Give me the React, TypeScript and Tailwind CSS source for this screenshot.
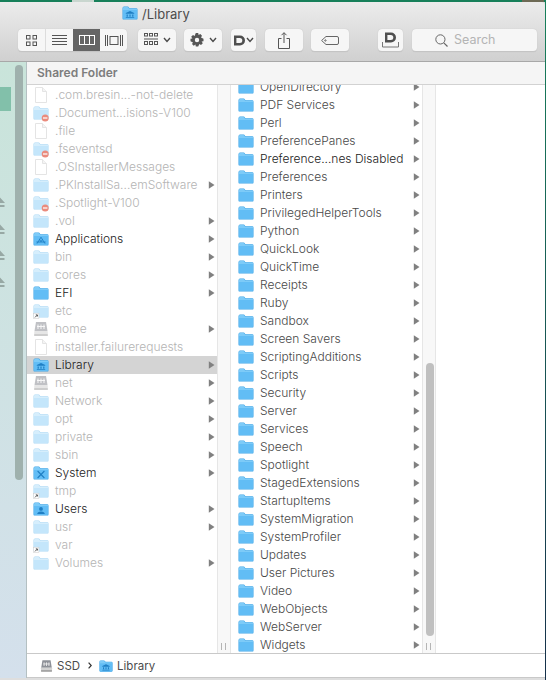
import React from "react";

type Glyph = "none" | "noentry" | "alias" | "apps" | "library" | "system" | "users";

function Folder({ dim = false, glyph = "none", size = 16 }: { dim?: boolean; glyph?: Glyph; size?: number }) {
  const body = dim ? "#c4e6fb" : "#62bdf5";
  const top = dim ? "#d6eefc" : "#7dcbf8";
  const edge = dim ? "#aad8f5" : "#3ea4e6";
  const mark = "#1f7fc4";
  return (
    <svg width={size} height={size} viewBox="0 0 16 16" className="shrink-0 overflow-visible">
      <path d="M0.5 3.2 Q0.5 1.6 2 1.6 H5.6 Q6.4 1.6 6.9 2.4 L7.4 3.2 H14.2 Q15.5 3.2 15.5 4.5 V13.4 Q15.5 14.6 14.2 14.6 H1.8 Q0.5 14.6 0.5 13.4 Z" fill={edge} />
      <path d="M0.9 4.9 H15.1 V13.3 Q15.1 14 14.2 14 H1.8 Q0.9 14 0.9 13.3 Z" fill={body} />
      <path d="M0.9 3.3 Q0.9 2.1 2 2.1 H5.5 Q6.1 2.1 6.5 2.8 L7.1 3.8 H14.2 Q15.1 3.8 15.1 4.7 V5 H0.9 Z" fill={top} />
      {glyph === "noentry" && (
        <g>
          <circle cx="12.2" cy="13" r="3.5" fill="#ea8b7d" />
          <rect x="10" y="12.4" width="4.4" height="1.2" fill="#ffffff" />
        </g>
      )}
      {glyph === "alias" && (
        <g>
          <rect x="0.5" y="10.2" width="5.4" height="5.4" fill="#ffffff" stroke="#c9c9c9" strokeWidth="0.5" />
          <path d="M2 14.4 L4.2 12.2 M2.8 11.9 H4.4 V13.5" stroke="#444444" strokeWidth="0.9" fill="none" />
        </g>
      )}
      {glyph === "apps" && (
        <path d="M8 6.2 L4 12.6 M8 6.2 L12 12.6 M3.4 11 H12.6 M6.4 8.2 L8 10.8 L9.6 8.2" stroke={mark} strokeWidth="0.9" fill="none" />
      )}
      {glyph === "library" && (
        <path d="M8 6 L12.2 8 V8.8 H3.8 V8 Z M4.6 9.4 H5.8 V11.8 H4.6 Z M7.4 9.4 H8.6 V11.8 H7.4 Z M10.2 9.4 H11.4 V11.8 H10.2 Z M3.8 12.2 H12.2 V13 H3.8 Z" fill={mark} />
      )}
      {glyph === "system" && <path d="M4.6 6 L11.4 13 M11.4 6 L4.6 13" stroke={mark} strokeWidth="1.1" fill="none" />}
      {glyph === "users" && (
        <path d="M8 6 A1.9 1.9 0 1 1 8 9.8 A1.9 1.9 0 1 1 8 6 Z M4.2 13 Q4.4 10.4 8 10.4 Q11.6 10.4 11.8 13 Z" fill={mark} />
      )}
    </svg>
  );
}

function Doc() {
  return (
    <svg width={16} height={16} viewBox="0 0 16 16" className="shrink-0">
      <path d="M2.5 0.5 H9.5 L13.5 4.5 V15.5 H2.5 Z" fill="#ffffff" stroke="#e4e4e4" />
      <path d="M9.5 0.5 V4.5 H13.5" fill="#f4f4f4" stroke="#e4e4e4" />
    </svg>
  );
}

function Drive({ dim = true, w = 16 }: { dim?: boolean; w?: number }) {
  return (
    <svg width={w} height={16} viewBox="0 0 16 16" className="shrink-0" opacity={dim ? 0.55 : 1}>
      <path d="M3 1 H13 L14.5 10 H1.5 Z" fill="#8d9097" />
      <rect x="1.2" y="10" width="13.6" height="5" rx="0.8" fill="#d2d2d2" />
      <rect x="1.2" y="13" width="13.6" height="2" rx="0.6" fill="#a5a5a5" />
      <path d="M5 3.5 V8 M8 3.5 V8 M11 3.5 V8 M4 5.5 H12" stroke="#f2f2f2" strokeWidth="1" fill="none" />
    </svg>
  );
}

function Arrow() {
  return (
    <svg width={7} height={8} viewBox="0 0 7 8" className="shrink-0">
      <path d="M0.8 0.3 L6.5 4 L0.8 7.7 Z" fill="#808080" />
    </svg>
  );
}

type Row = { n: string; dim?: boolean; g?: Glyph; kind?: "folder" | "doc" | "drive"; arrow?: boolean; sel?: boolean; dark?: boolean };

const col1: Row[] = [
  { n: ".com.bresin...-not-delete", dim: true, kind: "doc" },
  { n: ".Document...isions-V100", dim: true, g: "noentry" },
  { n: ".file", dim: true, kind: "doc" },
  { n: ".fseventsd", dim: true, g: "noentry" },
  { n: ".OSInstallerMessages", dim: true, kind: "doc" },
  { n: ".PKInstallSa...emSoftware", dim: true, arrow: true },
  { n: ".Spotlight-V100", dim: true, g: "noentry" },
  { n: ".vol", dim: true, arrow: true },
  { n: "Applications", g: "apps", arrow: true, dark: true },
  { n: "bin", dim: true, arrow: true },
  { n: "cores", dim: true, arrow: true },
  { n: "EFI", arrow: true, dark: true },
  { n: "etc", dim: true, g: "alias" },
  { n: "home", dim: true, kind: "drive", arrow: true },
  { n: "installer.failurerequests", dim: true, kind: "doc" },
  { n: "Library", g: "library", arrow: true, sel: true, dark: true },
  { n: "net", dim: true, kind: "drive", arrow: true },
  { n: "Network", dim: true, arrow: true },
  { n: "opt", dim: true, arrow: true },
  { n: "private", dim: true, arrow: true },
  { n: "sbin", dim: true, arrow: true },
  { n: "System", g: "system", arrow: true, dark: true },
  { n: "tmp", dim: true, g: "alias" },
  { n: "Users", g: "users", arrow: true, dark: true },
  { n: "usr", dim: true, arrow: true },
  { n: "var", dim: true, g: "alias" },
  { n: "Volumes", dim: true, arrow: true },
];

const col2 = [
  "OpenDirectory", "PDF Services", "Perl", "PreferencePanes", "Preference...nes Disabled", "Preferences", "Printers",
  "PrivilegedHelperTools", "Python", "QuickLook", "QuickTime", "Receipts", "Ruby", "Sandbox", "Screen Savers",
  "ScriptingAdditions", "Scripts", "Security", "Server", "Services", "Speech", "Spotlight", "StagedExtensions",
  "StartupItems", "SystemMigration", "SystemProfiler", "Updates", "User Pictures", "Video", "WebObjects", "WebServer", "Widgets",
];

function FileRow({ r, inset = false }: { r: Row; inset?: boolean }) {
  const tone = r.dim ? "text-[#b4b4b4]" : r.dark ? "text-[#222222]" : "text-[#484848]";
  return (
    <div className={`flex h-[18px] items-center pr-[2px] ${inset ? "pl-[7px]" : "pl-[6px]"} ${r.sel ? "bg-[#d4d4d4]" : ""}`}>
      {r.kind === "doc" ? <Doc /> : r.kind === "drive" ? <Drive /> : <Folder dim={r.dim} glyph={r.g ?? "none"} />}
      <span className={`ml-[6px] flex-1 whitespace-nowrap font-light ${tone}`}>{r.n}</span>
      {r.arrow && <Arrow />}
    </div>
  );
}

function Gutter({ thumb = false }: { thumb?: boolean }) {
  return (
    <div className="relative w-[14px] shrink-0 border-x border-[#e6e6e6] bg-[#f8f8f8]">
      {thumb && <div className="absolute left-[3px] top-[278px] h-[273px] w-[8px] rounded-full bg-[#c0c0c0]" />}
      <div className="absolute bottom-[3px] left-[3px] flex h-[7px] gap-[3px]">
        <div className="w-px bg-[#b5b5b5]" />
        <div className="w-px bg-[#b5b5b5]" />
      </div>
    </div>
  );
}

function Btn({ w, className = "", children }: { w: string; className?: string; children?: React.ReactNode }) {
  return (
    <div className={`flex h-[23px] items-center justify-center rounded-[4px] border-b border-[#c4c4c4] bg-[#f6f6f6] shadow-[0_0_1px_#b5b5b5] ${w} ${className}`}>
      {children}
    </div>
  );
}

const Chevron = () => (
  <svg width={8} height={6} viewBox="0 0 8 6"><path d="M1 1 L4 4.4 L7 1" stroke="#4a4a4a" strokeWidth="1.4" fill="none" /></svg>
);

function Eject() {
  return (
    <svg width={5} height={10} viewBox="0 0 5 10" className="block">
      <path d="M-5 6 L0 0.5 L5 6 Z M-5 8 H4.5 V10 H-5 Z" fill="#97a8a4" />
    </svg>
  );
}

export default function App() {
  return (
    <div className="flex h-[680px] w-[546px] flex-col overflow-hidden bg-[#d9d9d9] text-[12px] leading-[18px] font-['Inter',_'Liberation_Sans',_sans-serif]">
      <div className="flex h-[2px] shrink-0 bg-[#17805a]">
        <div className="ml-[72px] w-[22px] bg-[#c9d6cf]" />
        <div className="ml-auto mr-[2px] w-[22px] bg-[#6d6a55]" />
      </div>
      <div className="flex min-h-0 flex-1">
        <div className="flex w-[545px] flex-col">
          {/* toolbar */}
          <div className="h-[60px] shrink-0 rounded-tr-[4px] border-b border-[#a8a8a8] bg-gradient-to-b from-[#ececec] to-[#d0d0d0]">
            <div className="flex h-[26px] items-start pl-[122px] pt-[3px]">
              <Folder glyph="library" size={16} />
              <span className="ml-[4px] text-[13px] leading-[18px] text-[#4c4c4c]">/Library</span>
            </div>
            <div className="flex items-center pl-[18px] pt-[1px]">
              <div className="flex h-[23px] w-[109px] overflow-hidden rounded-[4px] border-b border-[#c4c4c4] bg-[#f6f6f6] shadow-[0_0_1px_#b5b5b5]">
                <div className="flex w-[28px] items-center justify-center border-r border-[#dcdcdc]">
                  <svg width={11} height={11} viewBox="0 0 11 11" fill="none" stroke="#555555"><rect x="0.5" y="0.5" width="3.5" height="3.5" /><rect x="7" y="0.5" width="3.5" height="3.5" /><rect x="0.5" y="7" width="3.5" height="3.5" /><rect x="7" y="7" width="3.5" height="3.5" /></svg>
                </div>
                <div className="flex w-[27px] items-center justify-center">
                  <svg width={15} height={11} viewBox="0 0 15 11" stroke="#555555"><path d="M0 0.5 H15 M0 3.5 H15 M0 6.5 H15 M0 9.5 H15" /></svg>
                </div>
                <div className="flex w-[27px] items-center justify-center bg-[#656565]">
                  <svg width={16} height={10} viewBox="0 0 16 10" fill="none" stroke="#ffffff"><rect x="0.5" y="0.5" width="15" height="9" /><path d="M5.5 0 V10 M10.5 0 V10" /></svg>
                </div>
                <div className="flex w-[27px] items-center justify-center">
                  <svg width={18} height={11} viewBox="0 0 18 11" fill="none" stroke="#555555"><rect x="5" y="1.5" width="8" height="8" /><path d="M0.5 0 V11 M2.5 0 V11 M15.5 0 V11 M17.5 0 V11" /></svg>
                </div>
              </div>
              <Btn w="w-[38px]" className="ml-[11px] gap-[5px]">
                <svg width={14} height={14} viewBox="0 0 14 14" fill="none" stroke="#555555"><rect x="0.5" y="0.5" width="3" height="2.5" /><rect x="5.5" y="0.5" width="3" height="2.5" /><rect x="10.5" y="0.5" width="3" height="2.5" /><path d="M0 6 H14" /><rect x="0.5" y="8.5" width="3" height="3" /><rect x="5.5" y="8.5" width="3" height="3" /><rect x="10.5" y="8.5" width="3" height="3" /></svg>
                <Chevron />
              </Btn>
              <Btn w="w-[38px]" className="ml-[8px] gap-[5px]">
                <svg width={14} height={14} viewBox="0 0 14 14"><path fillRule="evenodd" fill="#555555" d="M5.8 0 H8.2 L8.6 2 L10.3 1.1 L12 2.8 L11 4.5 L13.5 5.8 V8.2 L11.6 8.6 L12.8 10.3 L11 12 L9.4 11 L8.2 13.5 H5.8 L5.4 11.6 L3.7 12.8 L2 11 L3 9.4 L0.5 8.2 V5.8 L2.4 5.4 L1.2 3.7 L3 2 L4.6 3 Z M7 4.8 A2.2 2.2 0 1 0 7 9.2 A2.2 2.2 0 1 0 7 4.8 Z" /></svg>
                <Chevron />
              </Btn>
              <Btn w="w-[25px]" className="ml-[9px] gap-[1px]">
                <svg width={11} height={11} viewBox="0 0 11 11"><path fillRule="evenodd" fill="#4f4f4f" d="M0 0.5 H6 A5 5 0 0 1 6 10.5 H0 Z M2.4 3 V8 H5.8 A2.5 2.5 0 0 0 5.8 3 Z" /></svg>
                <Chevron />
              </Btn>
              <Btn w="w-[38px]" className="ml-[9px]">
                <svg width={12} height={17} viewBox="0 0 12 17" fill="none" stroke="#555555"><path d="M3.5 6.5 H0.5 V16.5 H11.5 V6.5 H8.5 M6 11 V0.8 M3.5 3.2 L6 0.7 L8.5 3.2" /></svg>
              </Btn>
              <Btn w="w-[38px]" className="ml-[8px]">
                <svg width={18} height={9} viewBox="0 0 18 9" fill="none" stroke="#666666"><path d="M5 0.5 H16 Q17.5 0.5 17.5 2 V7 Q17.5 8.5 16 8.5 H5 L0.6 4.5 Z" /><circle cx="4.4" cy="4.5" r="0.7" /></svg>
              </Btn>
              <Btn w="w-[25px]" className="ml-[29px]">
                <svg width={17} height={16} viewBox="0 0 17 16"><path fillRule="evenodd" fill="#4f4f4f" d="M3 0.5 H9 A5 5 0 0 1 9 10.5 H3 Z M5.4 3 V8 H8.8 A2.5 2.5 0 0 0 8.8 3 Z" /><path d="M0.5 10 V15 H16.5 V10" fill="none" stroke="#777777" /></svg>
              </Btn>
              <Btn w="w-[125px]" className="ml-[9px] justify-start pl-[23px]">
                <svg width={13} height={13} viewBox="0 0 13 13" fill="none" stroke="#666666"><circle cx="5.4" cy="5.4" r="4.6" /><path d="M8.8 8.8 L12.5 12.5" strokeWidth="1.2" /></svg>
                <span className="ml-[6px] text-[12.5px] text-[#b4b4b4]">Search</span>
              </Btn>
            </div>
          </div>

          <div className="flex min-h-0 flex-1">
            {/* sidebar */}
            <div className="relative flex w-[27px] shrink-0 flex-col border-r border-[#b4c0c2] bg-gradient-to-b from-[#c9e4da] to-[#d4e0ec]">
              <div className="mt-[25px] h-[24px] w-[11px] bg-[#82c0aa]" />
              <div className="mt-[86px] flex flex-col gap-[16.5px]">
                <Eject /><Eject /><Eject /><Eject />
              </div>
              <div className="absolute left-[15px] top-[3px] h-[415px] w-[8px] rounded-full bg-[#9fb1ad]" />
            </div>

            <div className="flex min-w-0 flex-1 flex-col bg-white">
              <div className="flex h-[23px] shrink-0 items-center border-b border-[#d2d2d2] bg-[#f5f5f5] pl-[10px] text-[12px] font-semibold text-[#7d7d7d]">
                Shared Folder
              </div>
              <div className="flex min-h-0 flex-1 overflow-hidden">
                <div className="w-[190px] shrink-0 pt-px">
                  {col1.map((r) => <FileRow key={r.n} r={r} />)}
                </div>
                <Gutter />
                <div className="w-[191px] shrink-0 -mt-[7px]">
                  {col2.map((n) => (
                    <FileRow key={n} inset r={{ n, arrow: true, dark: n === "Preference...nes Disabled" }} />
                  ))}
                </div>
                <Gutter thumb />
                <div className="flex-1 bg-white" />
              </div>
              <div className="flex h-[25px] shrink-0 items-center border-y border-[#c9c9c9] bg-white pl-[13px] text-[11.5px] text-[#4c4c4c]">
                <Drive dim={false} w={13} />
                <span className="ml-[4px]">SSD</span>
                <svg width={4} height={7} viewBox="0 0 4 7" className="ml-[8px]"><path d="M0.6 0.6 L3.2 3.5 L0.6 6.4" stroke="#333333" strokeWidth="1.2" fill="none" /></svg>
                <span className="ml-[7px]"><Folder glyph="library" size={14} /></span>
                <span className="ml-[4px]">Library</span>
              </div>
            </div>
          </div>
          <div className="h-[2px] shrink-0 bg-[#dedede]" />
        </div>
        <div className="w-px bg-gradient-to-b from-[#17805a] to-[#15304a]" />
      </div>
    </div>
  );
}
